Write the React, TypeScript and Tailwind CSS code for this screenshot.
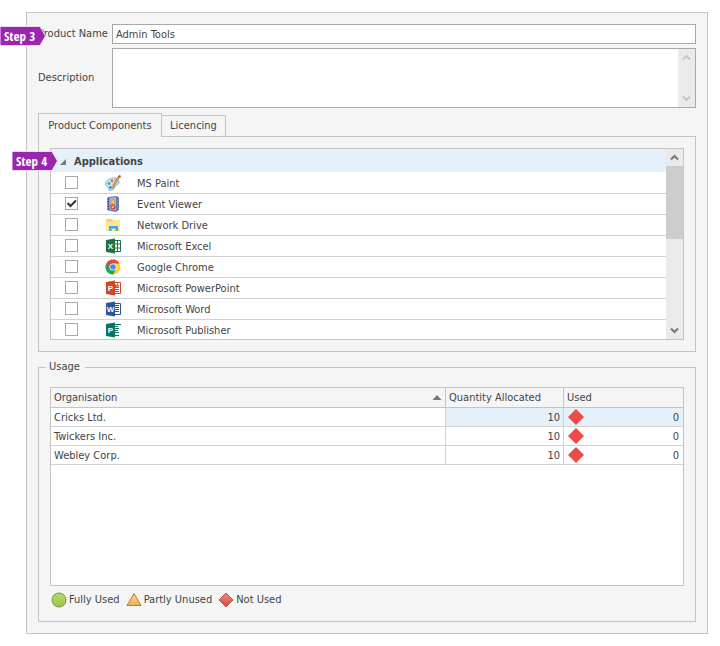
import { useState, type ReactNode } from "react"

interface AppItem {
  name: string
  icon: ReactNode
}

interface UsageRow {
  organisation: string
  allocated: number
  used: number
}

function PaintIcon() {
  return (
    <svg viewBox="0 0 16 16" className="size-4" aria-hidden="true">
      <path d="M0.600 9.500C0.600 5.500 4 3.200 8.500 3c4-0.200 6 2 5.500 5-0.500 2-3 1.500-4 3.500s-2 4-5 4c-2 0-2.200-1.200-1.200-2.300S0.600 12 0.600 9.500Z" fill="#c3e0f4" stroke="#7aa9cc" strokeWidth="0.8" />
      <circle cx="4" cy="8.500" r="1.300" fill="#3fae49" />
      <circle cx="7" cy="5.800" r="1.200" fill="#e2574c" />
      <circle cx="5.500" cy="12.500" r="1.300" fill="#3b78c4" />
      <circle cx="10" cy="5.500" r="1" fill="#f2c12e" />
      <path d="m14.800 2-5 8.500-2 3.500 0.200-4 5-8.500Z" fill="#e0a052" stroke="#a4651f" strokeWidth="0.500" />
      <path d="m13 1.200 1.500-1.200 1.500 1-0.800 2Z" fill="#8f5a2b" />
    </svg>
  )
}

function EventViewerIcon() {
  return (
    <svg viewBox="0 0 16 16" className="size-4" aria-hidden="true">
      <path d="M3 1.500 11.500 0.500l2 1V14L11 15.500 3 14Z" fill="#6f82b2" stroke="#4d5f8e" strokeWidth="0.7" />
      <path d="M4.500 2 11 1v13.500l-6.500-1Z" fill="#a3b2d4" />
      <path d="M2 3h2M2 5.500h2M2 8h2M2 10.500h2M2 13h2" stroke="#39466b" strokeWidth="1" />
      <path d="m8 3 2.300 4.200H5.700Z" fill="#f8d23a" stroke="#c49a16" strokeWidth="0.4" />
      <circle cx="8" cy="10.800" r="2" fill="#fff" stroke="#d23b3b" strokeWidth="1.200" />
      <path d="m6.700 9.500 2.600 2.600" stroke="#d23b3b" strokeWidth="1" />
    </svg>
  )
}

function FolderIcon() {
  return (
    <svg viewBox="0 0 16 16" className="size-4" aria-hidden="true">
      <path d="M1 2h6l1 1h7v11H1Z" fill="#ffe594" />
      <path d="M1 2h6l1 1.500-1.500 1H1Z" fill="#fbd065" />
      <path d="M4 9h9v5h-2.500v-2.500h-4V14H4Z" fill="#35ade3" />
    </svg>
  )
}

function ChromeIcon() {
  return (
    <svg viewBox="0 0 16 16" className="size-4" aria-hidden="true">
      <circle cx="8" cy="8" r="7.500" fill="#fdd036" />
      <path d="M8 8 1.500 4.250A7.500 7.500 0 0 0 8 15.500L11.200 9.900Z" fill="#20a35a" />
      <path d="M1.500 4.250A7.500 7.500 0 0 1 14.500 4.500H8L4.800 9.800Z" fill="#e04a3f" />
      <circle cx="8" cy="8" r="3.600" fill="#fff" />
      <circle cx="8" cy="8" r="2.800" fill="#4285f4" />
    </svg>
  )
}

function OfficeIcon({ letter, color, children }: { letter: string; color: string; children: ReactNode }) {
  return (
    <svg viewBox="0 0 16 16" className="size-4" aria-hidden="true">
      <g fill="none" stroke={color}>
        {children}
      </g>
      <path d="M1 2 10 0.500v15L1 14Z" fill={color} />
      <text x="5.500" y="11" textAnchor="middle" fill="#fff" fontSize="8" fontWeight="700" fontFamily="Liberation Sans, sans-serif">
        {letter}
      </text>
    </svg>
  )
}

const APPLICATIONS: AppItem[] = [
  { name: "MS Paint", icon: <PaintIcon /> },
  { name: "Event Viewer", icon: <EventViewerIcon /> },
  { name: "Network Drive", icon: <FolderIcon /> },
  {
    name: "Microsoft Excel",
    icon: (
      <OfficeIcon letter="X" color="#1f7246">
        <path d="M10 2.500h5.500v11H10M10 6h5.500M10 10h5.500M12.500 2.500v11" />
      </OfficeIcon>
    ),
  },
  { name: "Google Chrome", icon: <ChromeIcon /> },
  {
    name: "Microsoft PowerPoint",
    icon: (
      <OfficeIcon letter="P" color="#d24625">
        <path d="M10 2.500h5.500v11H10M10 9.500h4M10 11.500h4" />
        <path d="M10 4.500h1.500v2H14V8h-4Z" fill="#d24625" stroke="none" />
        <path d="M12.500 3.500v2H14" />
      </OfficeIcon>
    ),
  },
  {
    name: "Microsoft Word",
    icon: (
      <OfficeIcon letter="W" color="#2a5699">
        <path d="M10 2.500h5.500v11H10M10 4.500h4M10 6.500h4M10 8.500h4M10 10.500h4" />
      </OfficeIcon>
    ),
  },
  {
    name: "Microsoft Publisher",
    icon: (
      <OfficeIcon letter="P" color="#077568">
        <path d="M10 2.500h6M10 4.500h3M10 6.500h4M10 8.500h3M10 10.500h4M10 13.500h4" />
      </OfficeIcon>
    ),
  },
]

const USAGE: UsageRow[] = [
  { organisation: "Cricks Ltd.", allocated: 10, used: 0 },
  { organisation: "Twickers Inc.", allocated: 10, used: 0 },
  { organisation: "Webley Corp.", allocated: 10, used: 0 },
]

function StepTag({ label, className }: { label: string; className: string }) {
  return (
    <div className={`absolute z-10 h-5 w-[46px] ${className}`}>
      <svg viewBox="0 0 46 20" className="absolute inset-0 size-full" aria-hidden="true">
        <path d="M0 0.500h40l5.500 9.500-5.500 9.500H0Z" fill="#9a26ae" stroke="#ecdcf0" strokeWidth="1" />
      </svg>
      <span className="relative block pl-1 font-['Liberation_Sans_Narrow','Open_Sans_Condensed','Liberation_Sans',sans-serif] text-[13px] leading-5 font-semibold whitespace-nowrap text-white">
        {label}
      </span>
    </div>
  )
}

function Chevron({ up = false }: { up?: boolean }) {
  return (
    <svg viewBox="0 0 9 7" className="h-[7px] w-[9px]" fill="none" stroke="currentColor" strokeWidth="2" aria-hidden="true">
      <path d={up ? "M1 5.500 4.500 2 8 5.500" : "M1 1.500 4.500 5 8 1.500"} />
    </svg>
  )
}

function ScrollBar({ thumb = false }: { thumb?: boolean }) {
  return (
    <div className={`flex w-[17px] shrink-0 flex-col bg-[#eaeaea] ${thumb ? "text-[#777]" : "text-[#c6c6c6]"}`}>
      <button type="button" aria-label="Scroll up" className="grid h-[17px] shrink-0 place-items-center">
        <Chevron up />
      </button>
      <div className="flex-1">{thumb && <div className="h-[73px] bg-[#cdcdcd]" />}</div>
      <button type="button" aria-label="Scroll down" className="grid h-[17px] shrink-0 place-items-center">
        <Chevron />
      </button>
    </div>
  )
}

export default function App() {
  const [checked, setChecked] = useState<string[]>(["Event Viewer"])

  const toggle = (name: string) =>
    setChecked((prev) => (prev.includes(name) ? prev.filter((n) => n !== name) : [...prev, name]))

  return (
    <main className="min-h-screen bg-white pt-3 pr-3 pb-3 pl-[26px] font-['DejaVu_Sans_Condensed','Noto_Sans',sans-serif] text-[11px] leading-4 text-[#444]">
      <div className="border border-[#c4c4c4] bg-[#f5f5f5] p-[11px]">
        {/* Product details */}
        <div className="relative flex items-center">
          <StepTag label="Step 3" className="top-0.5 -left-[38px]" />
          <label htmlFor="product-name" className="w-[74px] shrink-0 whitespace-nowrap">
            Product Name
          </label>
          <input
            id="product-name"
            defaultValue="Admin Tools"
            className="h-5 min-w-0 flex-1 border border-[#a8a8a8] bg-white px-[3px] outline-none"
          />
        </div>
        <div className="mt-1 flex items-center">
          <label htmlFor="description" className="w-[74px] shrink-0">
            Description
          </label>
          <div className="flex h-[60px] min-w-0 flex-1 border border-[#a8a8a8] bg-white">
            <textarea id="description" className="min-w-0 flex-1 resize-none overflow-hidden px-[3px] outline-none" />
            <ScrollBar />
          </div>
        </div>

        {/* Tabs */}
        <div role="tablist" className="mt-[5px] flex h-6 items-end">
          <button
            type="button"
            role="tab"
            aria-selected="true"
            className="z-[1] h-6 w-[124px] border border-b-0 border-[#c4c4c4] bg-[#f5f5f5] whitespace-nowrap"
          >
            Product Components
          </button>
          <button
            type="button"
            role="tab"
            aria-selected="false"
            className="-ml-px h-[22px] w-[65px] border border-[#c4c4c4] bg-[#f5f5f5]"
          >
            Licencing
          </button>
        </div>
        <div role="tabpanel" className="relative -mt-px border border-[#c4c4c4] p-[11px]">
          <StepTag label="Step 4" className="top-3.5 -left-[27px]" />
          <div className="flex h-[192px] border border-[#c4c4c4] bg-white">
            <div className="min-w-0 flex-1 overflow-hidden">
              <div className="flex h-6 items-center gap-2 border-b border-white bg-[#e4f1fb] pt-0.5 pl-[9px]">
                <svg viewBox="0 0 6 6" className="size-1.5" aria-hidden="true">
                  <path d="M6 0v6H0Z" fill="#777" />
                </svg>
                <span className="font-bold">Applications</span>
              </div>
              <ul>
                {APPLICATIONS.map((app) => (
                  <li key={app.name} className="border-b border-[#d2d2d2]">
                    <label className="flex h-5 items-start pt-[3px] pl-3.5">
                      <span className="grid size-[13px]">
                        <input
                          type="checkbox"
                          checked={checked.includes(app.name)}
                          onChange={() => toggle(app.name)}
                          className="peer size-[13px] appearance-none border border-[#a8a8a8] bg-white [grid-area:1/1]"
                        />
                        <svg
                          viewBox="0 0 13 13"
                          className="pointer-events-none invisible size-[13px] [grid-area:1/1] peer-checked:visible"
                          fill="none"
                          stroke="#333"
                          strokeWidth="2"
                          aria-hidden="true"
                        >
                          <path d="m2.500 6 3 3L11 3.500" />
                        </svg>
                      </span>
                      <span className="-mt-px mr-4 ml-[27px]">{app.icon}</span>
                      {app.name}
                    </label>
                  </li>
                ))}
              </ul>
            </div>
            <ScrollBar thumb />
          </div>
        </div>

        {/* Usage */}
        <fieldset className="mt-[7px] min-w-0 border border-[#c4c4c4] px-[11px] pb-[13px]">
          <legend className="-ml-1 h-[17px] pr-[5px] pl-[3px] leading-4">Usage</legend>
          <div className="mt-[11px] h-[199px] border border-[#c4c4c4] bg-white">
            <table className="w-full table-fixed border-separate border-spacing-0">
              <thead>
                <tr className="h-5 bg-[#f5f5f5] text-left">
                  <th className="border-r border-b border-[#c4c4c4] p-0 font-normal">
                    <div className="flex items-center justify-between px-[3px]">
                      Organisation
                      <svg viewBox="0 0 10 5" className="h-[5px] w-2.5" aria-hidden="true">
                        <path d="M5 0 9.500 5h-9Z" fill="#777" />
                      </svg>
                    </div>
                  </th>
                  <th className="w-[118px] border-r border-b border-[#c4c4c4] px-[3px] py-0 font-normal whitespace-nowrap">
                    Quantity Allocated
                  </th>
                  <th className="w-[119px] border-b border-[#c4c4c4] px-[3px] py-0 font-normal">Used</th>
                </tr>
              </thead>
              <tbody>
                {USAGE.map((row, i) => (
                  <tr key={row.organisation} className="h-[19px]">
                    <td className="border-r border-b border-[#d2d2d2] px-[3px] pt-0.5 pb-0">{row.organisation}</td>
                    <td
                      className={`border-r border-b border-[#d2d2d2] px-[3px] pt-0.5 pb-0 text-right ${i === 0 ? "bg-[#e4f1fb]" : ""}`}
                    >
                      {row.allocated}
                    </td>
                    <td className={`border-b border-[#d2d2d2] px-1 pt-0.5 pb-0 ${i === 0 ? "bg-[#e4f1fb]" : ""}`}>
                      <div className="flex items-center justify-between">
                        <svg viewBox="0 0 16 16" className="-mt-0.5 size-4" role="img" aria-label="Not used">
                          <path d="m8 0 8 8-8 8-8-8Z" fill="#eb4a47" />
                        </svg>
                        {row.used}
                      </div>
                    </td>
                  </tr>
                ))}
              </tbody>
            </table>
          </div>

          {/* Key */}
          <div className="mt-1.5 flex gap-1.5 pl-px">
            <span className="flex items-center gap-0.5">
              <svg viewBox="0 0 16 16" className="size-4" aria-hidden="true">
                <defs>
                  <linearGradient id="green" x1="0" y1="0" x2="0" y2="1">
                    <stop offset="0" stopColor="#b9d873" />
                    <stop offset="1" stopColor="#9cc544" />
                  </linearGradient>
                </defs>
                <circle cx="8" cy="8" r="7" fill="url(#green)" stroke="#76983a" />
              </svg>
              Fully Used
            </span>
            <span className="flex items-center gap-0.5">
              <svg viewBox="0 0 16 16" className="size-4" aria-hidden="true">
                <defs>
                  <linearGradient id="amber" x1="0" y1="0" x2="0" y2="1">
                    <stop offset="0" stopColor="#f8d98f" />
                    <stop offset="1" stopColor="#eab257" />
                  </linearGradient>
                </defs>
                <path d="M8 1.500 15 13.500H1Z" fill="url(#amber)" stroke="#c07a3a" />
              </svg>
              Partly Unused
            </span>
            <span className="flex items-center gap-0.5">
              <svg viewBox="0 0 16 16" className="size-4" aria-hidden="true">
                <defs>
                  <linearGradient id="red" x1="0" y1="0" x2="0" y2="1">
                    <stop offset="0" stopColor="#ee8b80" />
                    <stop offset="1" stopColor="#d8453a" />
                  </linearGradient>
                </defs>
                <path d="m8 1 7 7-7 7-7-7Z" fill="url(#red)" stroke="#b8564c" />
              </svg>
              Not Used
            </span>
          </div>
        </fieldset>
      </div>
    </main>
  )
}
